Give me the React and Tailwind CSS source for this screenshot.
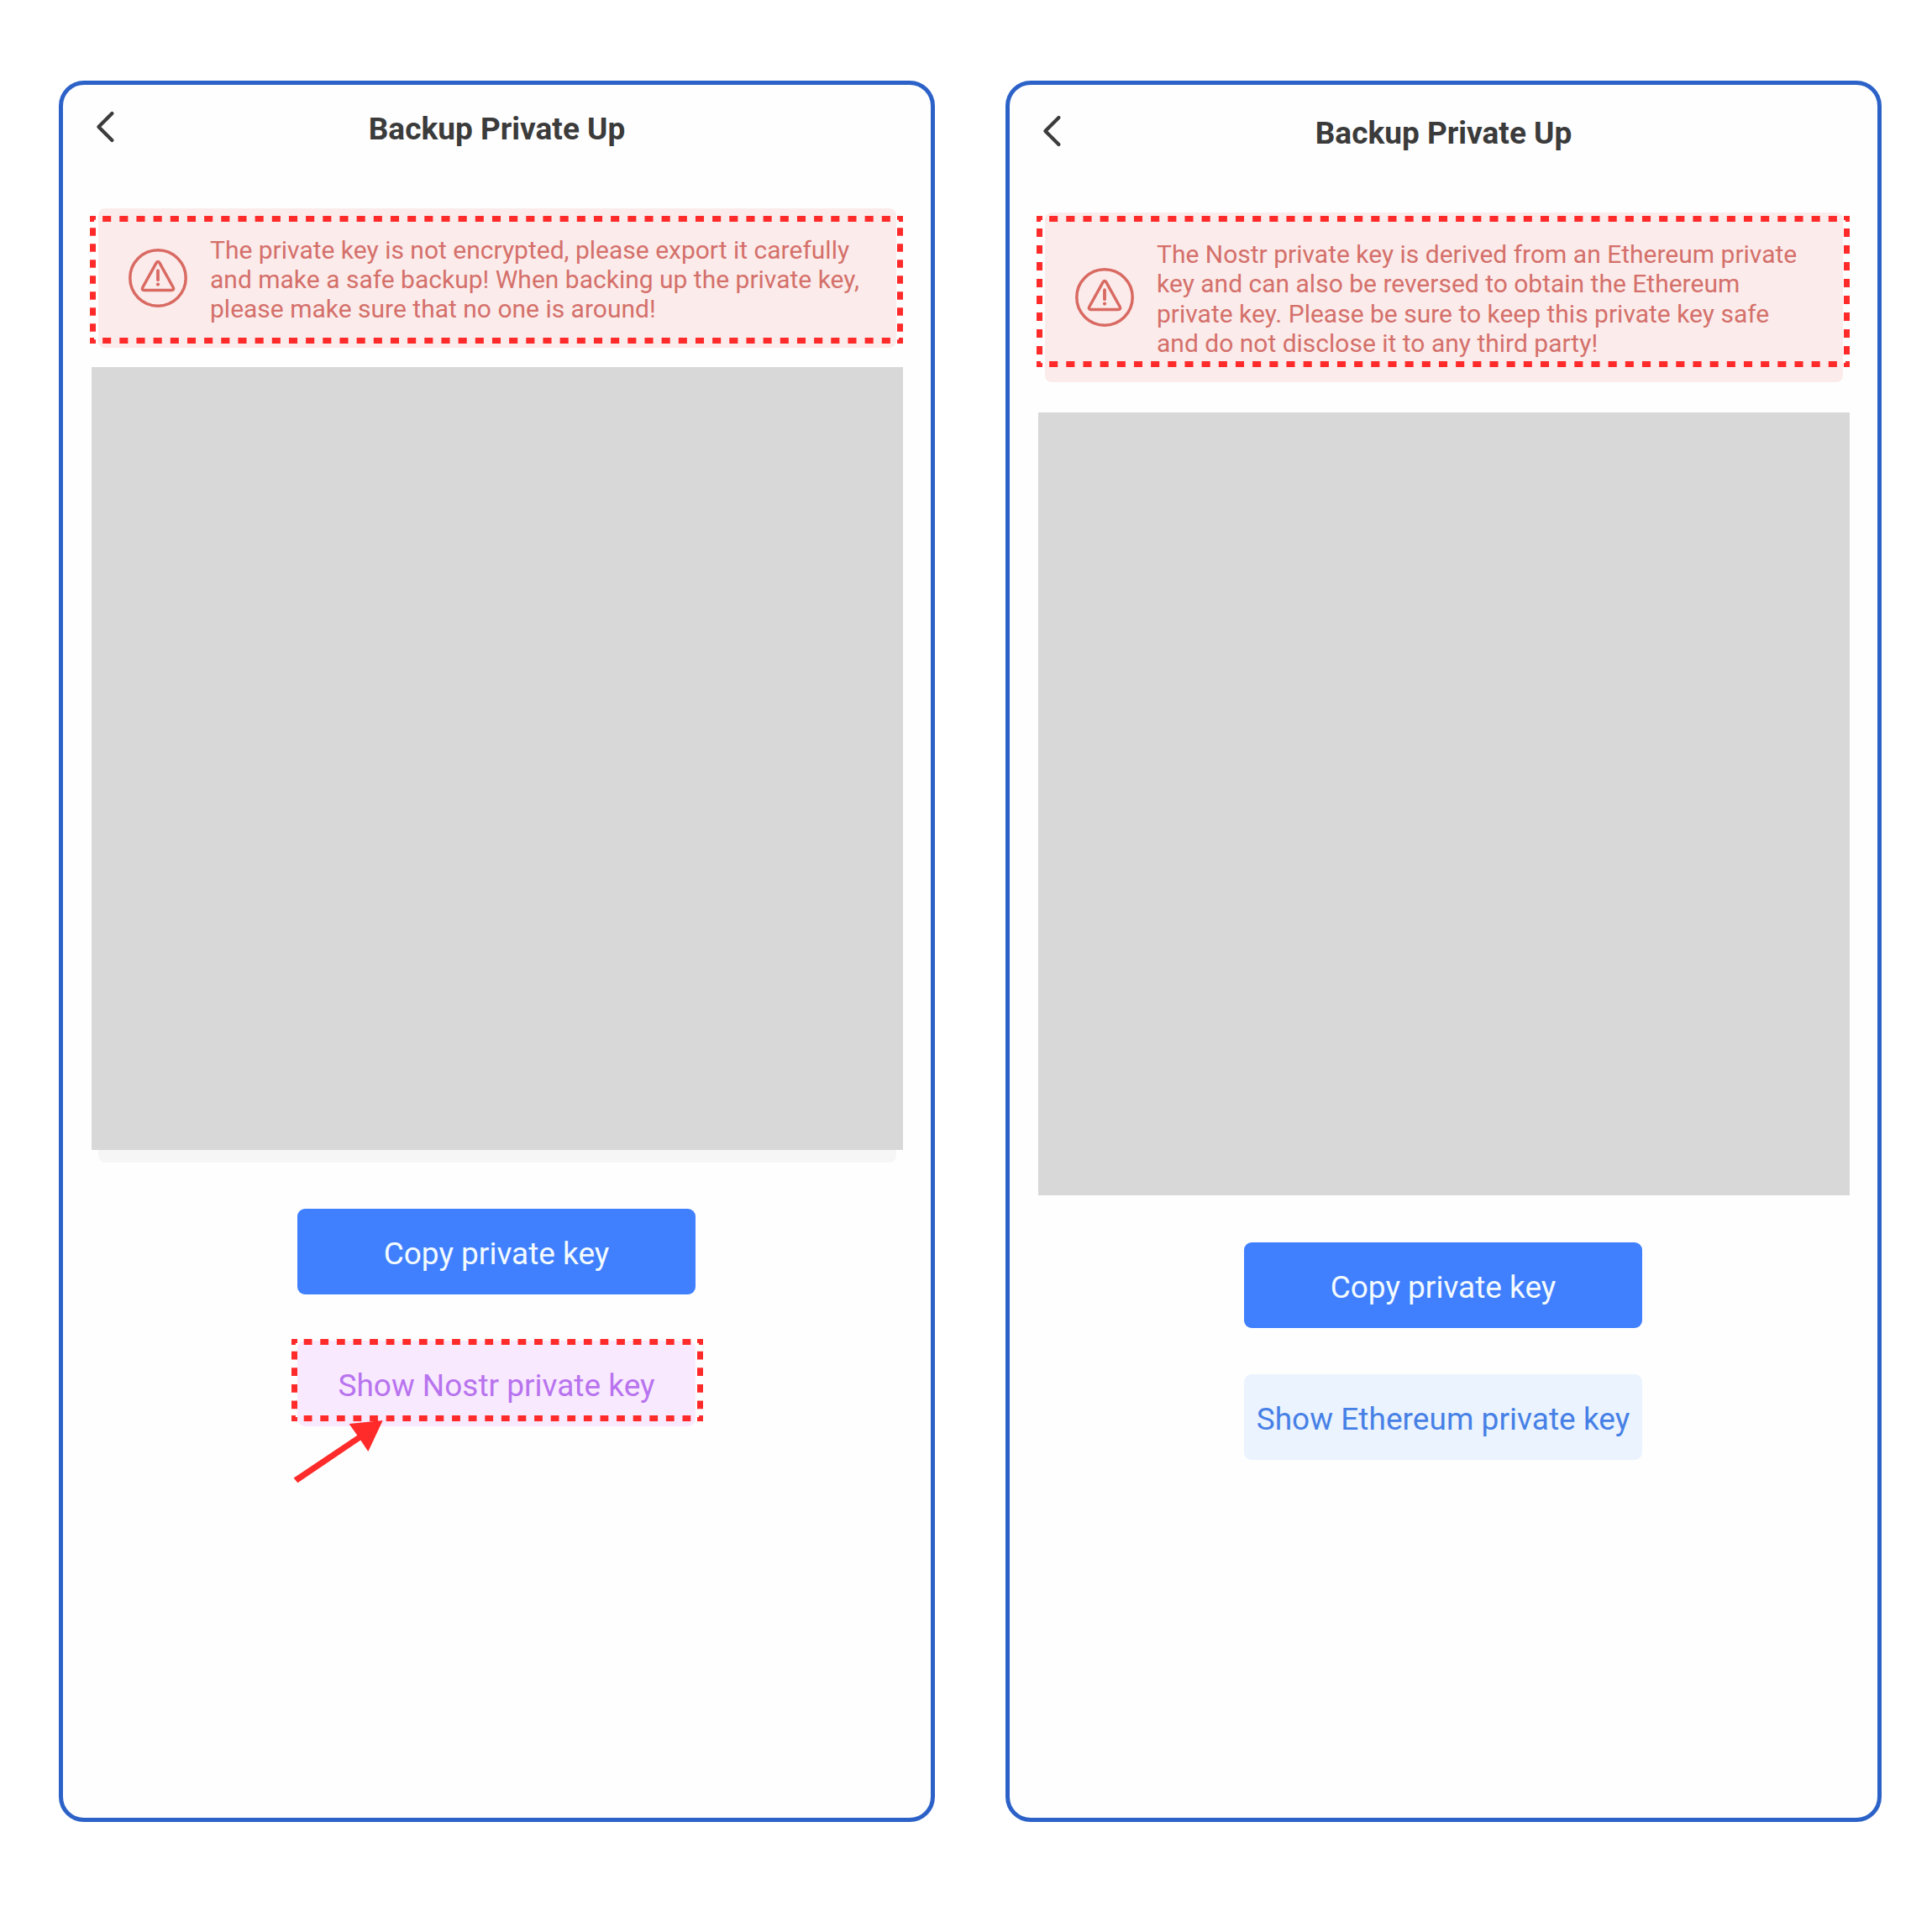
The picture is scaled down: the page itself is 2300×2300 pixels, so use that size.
const RED = "#ff2a2a";

function DashedFrame({ width, height, cols, rows, className }) {
  const px = width / cols / 2;
  const py = height / rows / 2;
  const horizontal = { stroke: RED, strokeWidth: 7, strokeDasharray: `${px} ${px}`, strokeDashoffset: px / 2 };
  const vertical = { stroke: RED, strokeWidth: 7, strokeDasharray: `${py} ${py}`, strokeDashoffset: py / 2 };
  return (
    <svg className={`pointer-events-none absolute max-w-none ${className}`} width={width} height={height} aria-hidden="true">
      <line x1="0" y1="3.5" x2={width} y2="3.5" {...horizontal} />
      <line x1="0" y1={height - 3.5} x2={width} y2={height - 3.5} {...horizontal} />
      <line x1="3.5" y1="0" x2="3.5" y2={height} {...vertical} />
      <line x1={width - 3.5} y1="0" x2={width - 3.5} y2={height} {...vertical} />
    </svg>
  );
}

function WarningIcon() {
  return (
    <svg className="ml-[36px] h-[70px] w-[70px] shrink-0" viewBox="0 0 70 70" fill="none" stroke="#d96a62" aria-hidden="true">
      <circle cx="35" cy="35" r="33.2" strokeWidth="3.5" />
      <path d="M33.1 16.9Q35 13.9 36.9 16.9L53.1 46Q54.6 49.4 51.2 49.4H18.8Q15.4 49.4 16.9 46Z" strokeWidth="3.5" strokeLinejoin="round" />
      <path d="M35 26.2V37.2" strokeWidth="3.8" strokeLinecap="round" />
      <circle cx="35" cy="42.6" r="2.1" fill="#d96a62" stroke="none" />
    </svg>
  );
}

function Header() {
  return (
    <header className="relative flex h-[104px] items-center justify-center pt-[2px]">
      <button type="button" aria-label="Back" className="absolute top-[30px] left-[38px]">
        <svg width="24" height="40" viewBox="0 0 24 40" fill="none" stroke="#3c3c3c" strokeWidth="4.3" strokeLinecap="round" strokeLinejoin="round">
          <path d="M20.4 4L4.4 20L20.4 36" />
        </svg>
      </button>
      <h1 className="text-[37px] leading-[44px] font-bold text-[#3b3b3b]">Backup Private Up</h1>
    </header>
  );
}

function Notice({ lines, className, children }) {
  return (
    <div className={`relative ml-[42px] flex w-[950px] items-center rounded-[8px] bg-[#fbebeb] ${className}`}>
      <WarningIcon />
      <p className="ml-[27px] pt-[3px] text-[30px] leading-[35.25px] whitespace-nowrap text-[#d4706a]">
        {lines.map((line) => (
          <span key={line} className="block">{line}</span>
        ))}
      </p>
      {children}
    </div>
  );
}

function ActionButton({ label, className, children }) {
  return (
    <button
      type="button"
      className={`relative ml-[279px] flex h-[102px] w-[474px] items-center justify-center rounded-[9px] pt-[6px] text-[37px] leading-[44px] whitespace-nowrap ${className}`}
    >
      {label}
      {children}
    </button>
  );
}

function Arrow() {
  return (
    <svg className="absolute top-[94px] -left-[10px] max-w-none" width="120" height="90" fill={RED} aria-hidden="true">
      <path d="M5.6 69.5L81.3 18.8L71.6 5L111.7 1L94.3 38L85.3 24.6L10.4 75.3Z" />
    </svg>
  );
}

function Phone({ children, className }) {
  return (
    <section className={`flex h-[2073px] w-[1043px] flex-col rounded-[30px] border-[5px] border-[#2c62c8] bg-[#fefefe] ${className}`}>
      {children}
    </section>
  );
}

export default function App() {
  return (
    <main className="flex h-[2300px] w-[2300px] gap-[84px] bg-white pt-[96px] pl-[70px] font-[Roboto,sans-serif]">
      <Phone className="">
        <Header />
        <Notice
          className="mt-[43px] h-[166px]"
          lines={[
            "The private key is not encrypted, please export it carefully",
            "and make a safe backup! When backing up the private key,",
            "please make sure that no one is around!",
          ]}
        >
          <DashedFrame width={968} height={152} cols={48} rows={8} className="top-[9px] -left-[10px]" />
        </Notice>
        <div className="mt-[23px] ml-[34px] h-[932px] w-[966px] bg-[#d8d8d8]" />
        <div className="ml-[42px] h-[15px] w-[950px] rounded-b-[8px] bg-[#f6f6f6]" />
        <ActionButton label="Copy private key" className="mt-[55px] bg-[#4080ff] text-[#f4fbff]" />
        <ActionButton label="Show Nostr private key" className="mt-[55px] bg-[#f8e9ff] text-[#b873ee]">
          <DashedFrame width={490} height={98} cols={25} rows={5} className="-top-[2px] -left-[7px]" />
          <Arrow />
        </ActionButton>
      </Phone>
      <Phone className="pt-[5px]">
        <Header />
        <Notice
          className="mt-[43px] h-[202px]"
          lines={[
            "The Nostr private key is derived from an Ethereum private",
            "key and can also be reversed to obtain the Ethereum",
            "private key. Please be sure to keep this private key safe",
            "and do not disclose it to any third party!",
          ]}
        >
          <DashedFrame width={968} height={180} cols={48} rows={9} className="top-[4px] -left-[10px]" />
        </Notice>
        <div className="mt-[36px] ml-[34px] h-[932px] w-[966px] bg-[#d8d8d8]" />
        <ActionButton label="Copy private key" className="mt-[56px] bg-[#4080ff] text-[#f4fbff]" />
        <ActionButton label="Show Ethereum private key" className="mt-[55px] bg-[#eaf3fe] tracking-[0.04px] text-[#4680e6]" />
      </Phone>
    </main>
  );
}
